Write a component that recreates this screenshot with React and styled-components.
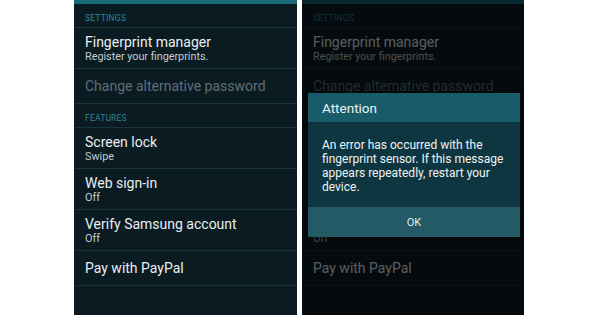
import styled, { createGlobalStyle } from "styled-components";

const Global = createGlobalStyle`
  html, body {
    margin: 0;
    padding: 0;
    background: #ffffff;
    font-family: Roboto, "Liberation Sans", sans-serif;
  }
`

const Page = styled.div`
  width: 600px;
  height: 315px;
  display: flex;
  gap: 5px;
  padding-left: 74px;
  box-sizing: border-box;
  overflow: hidden;
`

const Phone = styled.div`
  position: relative;
  width: ${p => p.$w}px;
  height: 315px;
  background: #0b1b22;
  display: flex;
  flex-direction: column;
  overflow: hidden;
  flex-shrink: 0;
`

const TopBar = styled.div`
  height: 4px;
  background: #1a6a7a;
  flex-shrink: 0;
`

const Header = styled.div`
  height: 24px;
  box-sizing: border-box;
  display: flex;
  align-items: flex-end;
  padding: 0 11px 4px;
  border-bottom: 1px solid #1c323a;
  color: #2b8798;
  font-size: 8.5px;
  letter-spacing: 0.2px;
  text-transform: uppercase;
  visibility: ${p => (p.$hidden ? "hidden" : "visible")};
`

const Row = styled.div`
  height: ${p => (p.$sub ? 41 : 35)}px;
  box-sizing: border-box;
  display: flex;
  flex-direction: column;
  justify-content: center;
  padding: 0 11px;
  border-bottom: 1px solid #1c323a;
`

const Title = styled.div`
  font-size: 14px;
  line-height: 16px;
  color: ${p => (p.$disabled ? "#5f6f75" : "#e9eff1")};
  visibility: ${p => (p.$hidden ? "hidden" : "visible")};
`

const Sub = styled.div`
  font-size: 10.8px;
  line-height: 12px;
  margin-top: 1px;
  color: #c3cdd0;
  visibility: ${p => (p.$hidden ? "hidden" : "visible")};
`

const Dim = styled.div`
  position: absolute;
  inset: 0;
  background: rgba(0, 0, 0, 0.62);
`

const Dialog = styled.div`
  position: absolute;
  top: 93px;
  left: 6px;
  right: 4px;
  background: #0e3640;
  box-shadow: 0 0 4px rgba(0, 0, 0, 0.5);
`

const DialogTitle = styled.div`
  height: 29px;
  display: flex;
  align-items: center;
  padding: 0 14px;
  background: #185c6a;
  color: #eef3f4;
  font-size: 13.5px;
`

const DialogBody = styled.div`
  height: 85px;
  box-sizing: border-box;
  padding: 16px 6px 0 14px;
  color: #eef3f4;
  font-size: 12px;
  line-height: 14px;
`

const Line = styled.div`
  white-space: nowrap;
`

const DialogButton = styled.div`
  height: 30px;
  display: flex;
  align-items: center;
  justify-content: center;
  background: #235a65;
  color: #e4ecee;
  font-size: 11px;
`

const items = [
  { type: "header", text: "Settings" },
  { title: "Fingerprint manager", sub: "Register your fingerprints." },
  { title: "Change alternative password", disabled: true },
  { type: "header", text: "Features" },
  { title: "Screen lock", sub: "Swipe" },
  { title: "Web sign-in", sub: "Off" },
  { title: "Verify Samsung account", sub: "Off" },
  { title: "Pay with PayPal" },
]

const message = [
  "An error has occurred with the",
  "fingerprint sensor. If this message",
  "appears repeatedly, restart your",
  "device.",
]

// hide = texts sitting fully under the dialog
const SettingsList = ({ hide = [] }) => (
  <>
    <TopBar />
    {items.map((it, i) =>
      it.type === "header" ? (
        <Header key={i} $hidden={hide.includes(it.text)}>{it.text}</Header>
      ) : (
        <Row key={i} $sub={!!it.sub}>
          <Title $disabled={it.disabled} $hidden={hide.includes(it.title)}>{it.title}</Title>
          {it.sub && <Sub $hidden={hide.includes(it.title) && it.title !== "Verify Samsung account"}>{it.sub}</Sub>}
        </Row>
      )
    )}
  </>
)

const App = () => {
  return (
    <Page>
      <Global />
      <Phone $w={223}>
        <SettingsList />
      </Phone>
      <Phone $w={222}>
        <SettingsList hide={["Features", "Screen lock", "Web sign-in", "Verify Samsung account"]} />
        <Dim />
        <Dialog>
          <DialogTitle>Attention</DialogTitle>
          <DialogBody>
            {message.map(l => <Line key={l}>{l}</Line>)}
          </DialogBody>
          <DialogButton>OK</DialogButton>
        </Dialog>
      </Phone>
    </Page>
  )
}

export default App
